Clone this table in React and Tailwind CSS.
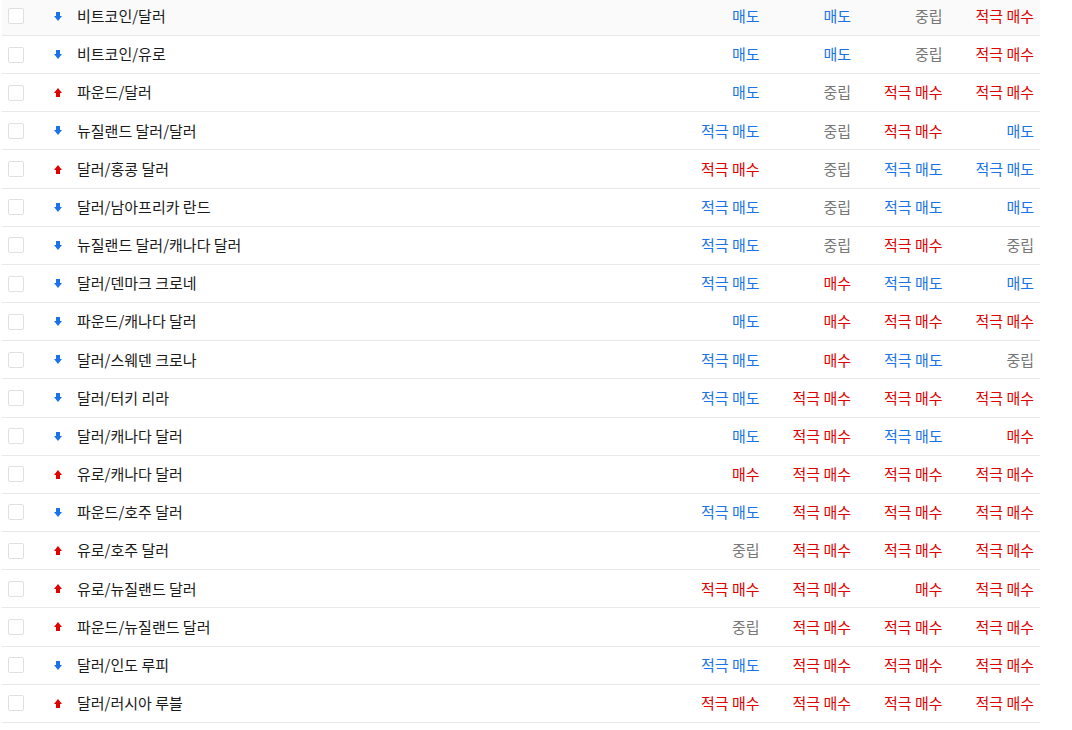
import React from "react";

const rows = [
  ["비트코인/달러", "down", ["매도", "매도", "중립", "적극 매수"]],
  ["비트코인/유로", "down", ["매도", "매도", "중립", "적극 매수"]],
  ["파운드/달러", "up", ["매도", "중립", "적극 매수", "적극 매수"]],
  ["뉴질랜드 달러/달러", "down", ["적극 매도", "중립", "적극 매수", "매도"]],
  ["달러/홍콩 달러", "up", ["적극 매수", "중립", "적극 매도", "적극 매도"]],
  ["달러/남아프리카 란드", "down", ["적극 매도", "중립", "적극 매도", "매도"]],
  ["뉴질랜드 달러/캐나다 달러", "down", ["적극 매도", "중립", "적극 매수", "중립"]],
  ["달러/덴마크 크로네", "down", ["적극 매도", "매수", "적극 매도", "매도"]],
  ["파운드/캐나다 달러", "down", ["매도", "매수", "적극 매수", "적극 매수"]],
  ["달러/스웨덴 크로나", "down", ["적극 매도", "매수", "적극 매도", "중립"]],
  ["달러/터키 리라", "down", ["적극 매도", "적극 매수", "적극 매수", "적극 매수"]],
  ["달러/캐나다 달러", "down", ["매도", "적극 매수", "적극 매도", "매수"]],
  ["유로/캐나다 달러", "up", ["매수", "적극 매수", "적극 매수", "적극 매수"]],
  ["파운드/호주 달러", "down", ["적극 매도", "적극 매수", "적극 매수", "적극 매수"]],
  ["유로/호주 달러", "up", ["중립", "적극 매수", "적극 매수", "적극 매수"]],
  ["유로/뉴질랜드 달러", "up", ["적극 매수", "적극 매수", "매수", "적극 매수"]],
  ["파운드/뉴질랜드 달러", "up", ["중립", "적극 매수", "적극 매수", "적극 매수"]],
  ["달러/인도 루피", "down", ["적극 매도", "적극 매수", "적극 매수", "적극 매수"]],
  ["달러/러시아 루블", "up", ["적극 매수", "적극 매수", "적극 매수", "적극 매수"]],
];

function colorFor(v) {
  if (v.includes("매도")) return "text-[#1a73e8]";
  if (v.includes("매수")) return "text-[#e00000]";
  return "text-[#777777]";
}

function Arrow({ dir }) {
  if (dir === "down") {
    return (
      <svg width="8" height="9" viewBox="0 0 8 9" className="block">
        <path d="M2 0 H6 V4 H8 L4 9 L0 4 H2 Z" fill="#1a73e8" />
      </svg>
    );
  }
  return (
    <svg width="8" height="9" viewBox="0 0 8 9" className="block">
      <path d="M2 9 H6 V5 H8 L4 0 L0 5 H2 Z" fill="#e00000" />
    </svg>
  );
}

export default function App() {
  return (
    <div
      className="w-[1072px] h-[730px] overflow-hidden bg-white"
      style={{ fontFamily: '"Noto Sans CJK KR", "Noto Sans", sans-serif' }}
    >
      <div className="ml-[2px] mt-[-2.17px] w-[1038px]">
        {rows.map(([name, dir, vals], i) => (
          <div
            key={i}
            className={`flex items-center h-[38.17px] border-b border-[#e8e8e8] text-[15px] ${
              i === 0 ? "bg-[#fafafa]" : "bg-white"
            }`}
          >
            <div className="w-[49px] pl-[6px] flex items-center">
              <div className="w-[16px] h-[16px] rounded-[2px] border border-[#e0e0e0] bg-white" />
            </div>
            <div className="w-[26px] flex items-center pl-[3px]">
              <Arrow dir={dir} />
            </div>
            <div className="flex-1 text-[#1a1a1a] whitespace-nowrap">{name}</div>
            {vals.map((v, j) => (
              <div
                key={j}
                className={`w-[91.5px] pr-[6px] text-right whitespace-nowrap ${colorFor(v)}`}
              >
                {v}
              </div>
            ))}
          </div>
        ))}
      </div>
    </div>
  );
}
